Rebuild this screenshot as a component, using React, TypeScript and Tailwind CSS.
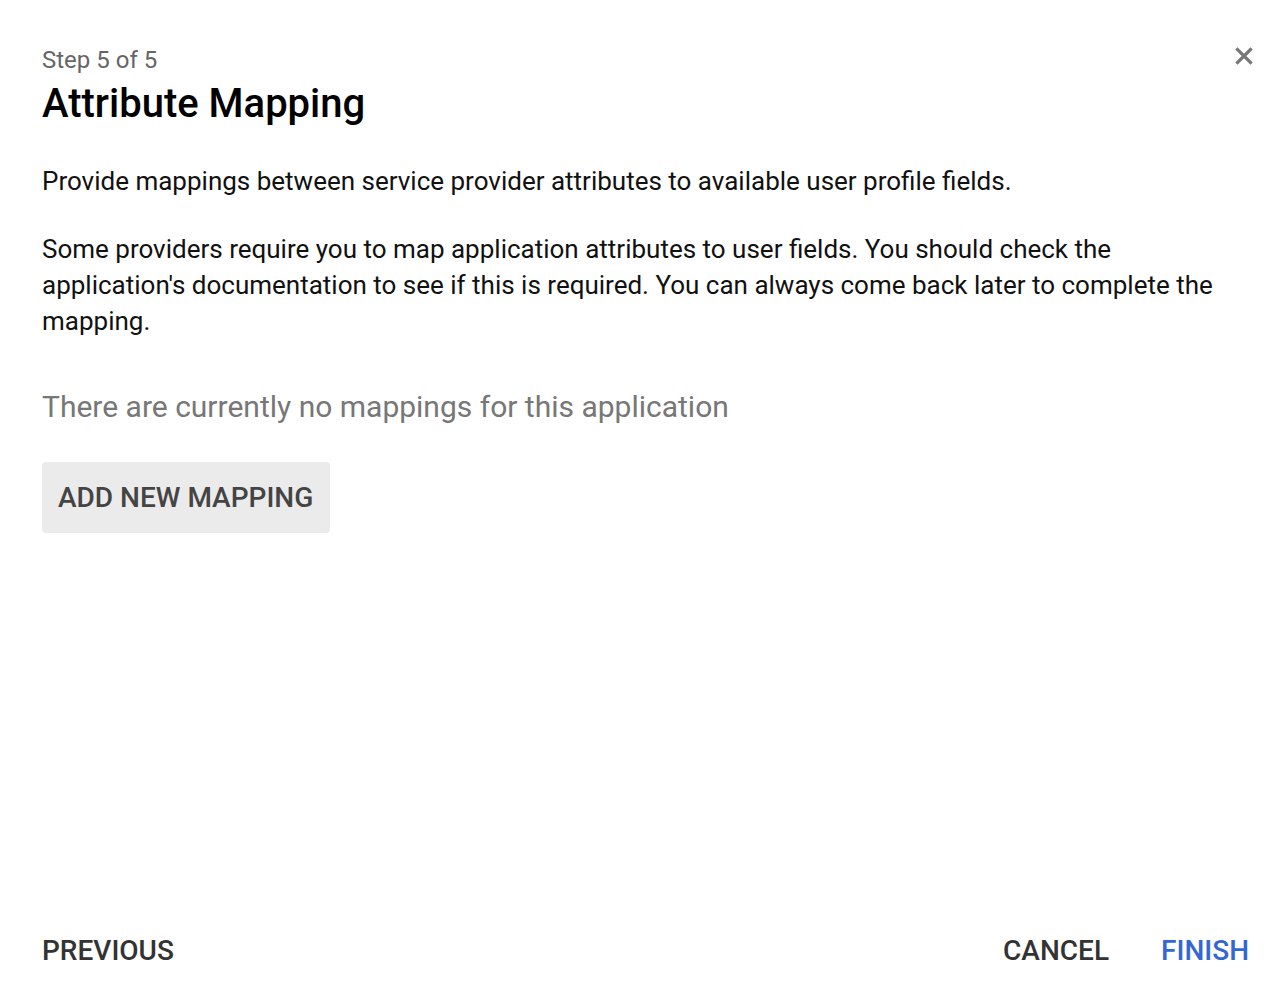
export default function App() {
  return (
    <div className="w-[1282px] h-[1004px] bg-white flex flex-col font-['Roboto',sans-serif] relative">
      <button className="absolute right-[27px] top-[45px] w-[22px] h-[22px] flex items-center justify-center text-[#777]">
        <svg viewBox="0 0 24 24" className="w-[22px] h-[22px]" fill="none" stroke="currentColor" strokeWidth="3.6" strokeLinecap="square">
          <path d="M5 5L19 19M19 5L5 19" />
        </svg>
      </button>
      <div className="flex-1 pl-[42px] pr-[42px] pt-[44px]">
        <div className="text-[24px] leading-[32px] text-[#666]">Step 5 of 5</div>
        <h1 className="text-[40px] leading-[48px] font-medium text-black mt-[4px]">Attribute Mapping</h1>
        <p className="text-[26px] leading-[36px] text-[#111] mt-[35px]">
          Provide mappings between service provider attributes to available user profile fields.
        </p>
        <p className="text-[26px] leading-[36px] text-[#111] mt-[32px]">
          Some providers require you to map application attributes to user fields. You should check the application's documentation to see if this is required. You can always come back later to complete the mapping.
        </p>
        <div className="text-[30px] leading-[40px] text-[#777] mt-[48px]">There are currently no mappings for this application</div>
        <button className="mt-[35px] h-[71px] pl-[16px] pr-[17px] rounded-[4px] bg-[#ebebeb] text-[#444] text-[28px] font-medium">
          ADD NEW MAPPING
        </button>
      </div>
      <div className="flex items-center pl-[42px] pr-[33px] pb-[6px] h-[100px]">
        <button className="text-[28px] font-medium text-[#333]">PREVIOUS</button>
        <div className="flex-1" />
        <button className="text-[28px] font-medium text-[#333] mr-[52px]">CANCEL</button>
        <button className="text-[28px] font-medium text-[#3367d6]">FINISH</button>
      </div>
    </div>
  );
}
